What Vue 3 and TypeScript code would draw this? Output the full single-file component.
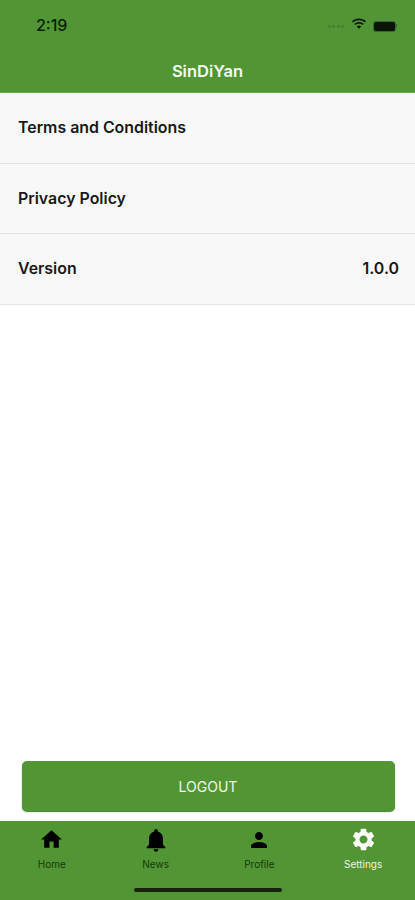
<script setup lang="ts">
interface Tab { label: string; path: string; size: number; active?: boolean }
const rows: { label: string; value?: string }[] = [
  { label: 'Terms and Conditions' },
  { label: 'Privacy Policy' },
  { label: 'Version', value: '1.0.0' },
]
const tabs: Tab[] = [
  { label: 'Home', size: 25, path: 'M10 20v-6h4v6h5v-8h3L12 3 2 12h3v8z' },
  { label: 'News', size: 28, path: 'M12 22c1.1 0 2-.9 2-2h-4c0 1.1.89 2 2 2zm6-6v-5c0-3.07-1.64-5.64-4.5-6.32V4c0-.83-.67-1.5-1.5-1.5s-1.5.67-1.5 1.5v.68C7.63 5.36 6 7.92 6 11v5l-2 2v1h16v-1l-2-2z' },
  { label: 'Profile', size: 24, path: 'M12 12c2.21 0 4-1.79 4-4s-1.79-4-4-4-4 1.79-4 4 1.79 4 4 4zm0 2c-2.67 0-8 1.34-8 4v2h16v-2c0-2.66-5.33-4-8-4z' },
  { label: 'Settings', size: 27, active: true, path: 'M19.14 12.94c.04-.3.06-.61.06-.94 0-.32-.02-.64-.07-.94l2.03-1.58c.18-.14.23-.41.12-.61l-1.92-3.32c-.12-.22-.37-.29-.59-.22l-2.39.96c-.5-.38-1.03-.7-1.62-.94l-.36-2.54c-.04-.24-.24-.41-.48-.41h-3.84c-.24 0-.43.17-.47.41l-.36 2.54c-.59.24-1.13.57-1.62.94l-2.39-.96c-.22-.08-.47 0-.59.22L2.74 8.87c-.12.21-.08.47.12.61l2.03 1.58c-.05.3-.09.63-.09.94s.02.64.07.94l-2.03 1.58c-.18.14-.23.41-.12.61l1.92 3.32c.12.22.37.29.59.22l2.39-.96c.5.38 1.03.7 1.62.94l.36 2.54c.05.24.24.41.48.41h3.84c.24 0 .44-.17.47-.41l.36-2.54c.59-.24 1.13-.56 1.62-.94l2.39.96c.22.08.47 0 .59-.22l1.92-3.32c.12-.22.07-.47-.12-.61l-2.01-1.58zM12 15.6c-1.98 0-3.6-1.62-3.6-3.6s1.62-3.6 3.6-3.6 3.6 1.62 3.6 3.6-1.62 3.6-3.6 3.6z' },
]
</script>

<template>
  <div class="page">
    <header class="header">
      <div class="status">
        <span class="time">2:19</span>
        <div class="status-icons">
          <div class="dots"><i></i><i></i><i></i><i></i></div>
          <svg class="wifi" viewBox="0 0 16 12" width="16" height="12">
            <path d="M8 2.2c2.3 0 4.3.9 5.9 2.3l1.1-1.2C13.1 1.6 10.7.6 8 .6S2.9 1.6 1 3.3l1.1 1.2C3.7 3.1 5.7 2.2 8 2.2z" />
            <path d="M8 5.7c1.3 0 2.5.5 3.5 1.3l1.1-1.2C11.3 4.7 9.7 4 8 4s-3.3.7-4.6 1.8L4.5 7c1-.8 2.2-1.3 3.5-1.3z" />
            <path d="M8 7.5c-.9 0-1.6.3-2.2.8L8 11l2.2-2.7c-.6-.5-1.3-.8-2.2-.8z" />
          </svg>
          <div class="battery"><span class="cell"></span><span class="cap"></span></div>
        </div>
      </div>
      <h1 class="title">SinDiYan</h1>
    </header>

    <section class="list">
      <div v-for="row in rows" :key="row.label" class="row">
        <span>{{ row.label }}</span>
        <span v-if="row.value">{{ row.value }}</span>
      </div>
    </section>

    <div class="actions">
      <button class="logout" type="button">LOGOUT</button>
    </div>

    <nav class="tabbar">
      <div class="tabs">
        <div v-for="tab in tabs" :key="tab.label" class="tab" :class="{ active: tab.active }">
          <span class="icon">
            <svg viewBox="0 0 24 24" :width="tab.size" :height="tab.size"><path :d="tab.path" /></svg>
          </span>
          <span class="tab-label">{{ tab.label }}</span>
        </div>
      </div>
      <div class="home-indicator"></div>
    </nav>
  </div>
</template>

<style scoped>
.page {
  display: flex;
  flex-direction: column;
  height: 900px;
  width: 415px;
  overflow: hidden;
  background: #fff;
  font-family: Inter, "Liberation Sans", sans-serif;
}
.header {
  height: 93px;
  box-sizing: border-box;
  background: #529534;
  border-bottom: 1px solid #6aa64e;
}
.status {
  height: 51px;
  box-sizing: border-box;
  padding: 16px 18px 0 36px;
  display: flex;
  justify-content: space-between;
  align-items: flex-start;
}
.time {
  font-size: 16px;
  line-height: 18px;
  font-weight: 500;
  color: #0c1f06;
}
.status-icons {
  display: flex;
  align-items: center;
  gap: 7px;
  height: 18px;
}
.dots {
  display: flex;
  gap: 1.5px;
  margin-top: 3px;
  opacity: 0.7;
}
.dots i {
  width: 3px;
  height: 3px;
  border-radius: 50%;
  background: #47733a;
}
.wifi {
  fill: #0a1a05;
  margin-top: -2px;
}
.battery {
  display: flex;
  align-items: center;
  gap: 1px;
  margin-top: 2px;
}
.cell {
  width: 21px;
  height: 9px;
  border-radius: 2px;
  background: #0a1505;
  box-shadow: 0 0 0 1px #3d6b29;
}
.cap {
  width: 1px;
  height: 4px;
  background: #3d6b29;
}
.title {
  margin: 0;
  font-size: 16.5px;
  line-height: 40px;
  font-weight: 600;
  text-align: center;
  color: #f6faf3;
}
.list {
  display: flex;
  flex-direction: column;
}
.row {
  height: 70.5px;
  box-sizing: border-box;
  padding: 0 16px 0 18px;
  display: flex;
  justify-content: space-between;
  align-items: center;
  background: #f8f8f8;
  border-bottom: 1px solid #e4e4e4;
  font-size: 15.9px;
  font-weight: 600;
  color: #181818;
}
.actions {
  flex: 1;
  display: flex;
  align-items: flex-end;
  padding: 0 20.5px 10px 21.5px;
}
.logout {
  width: 100%;
  height: 50px;
  border: none;
  border-radius: 5px;
  background: #529534;
  box-shadow: 0 1px 1px #3f8021;
  color: #f2f7ee;
  font-family: Inter, sans-serif;
  font-size: 14px;
}
.tabbar {
  height: 79px;
  background: #529534;
  display: flex;
  flex-direction: column;
  align-items: center;
}
.tabs {
  width: 100%;
  height: 67px;
  display: flex;
}
.tab {
  flex: 1;
  display: flex;
  flex-direction: column;
  align-items: center;
  padding-top: 4px;
  color: #153a0a;
}
.tab.active {
  color: #eef5ea;
}
.icon {
  height: 29px;
  display: flex;
  align-items: center;
  justify-content: center;
  color: #000;
}
.tab.active .icon {
  color: #fff;
}
.icon svg {
  fill: currentColor;
  display: block;
}
.tab-label {
  margin-top: 3px;
  font-size: 10px;
  line-height: 14px;
}
.home-indicator {
  width: 148px;
  height: 4px;
  border-radius: 2px;
  background: #17210f;
}
</style>
